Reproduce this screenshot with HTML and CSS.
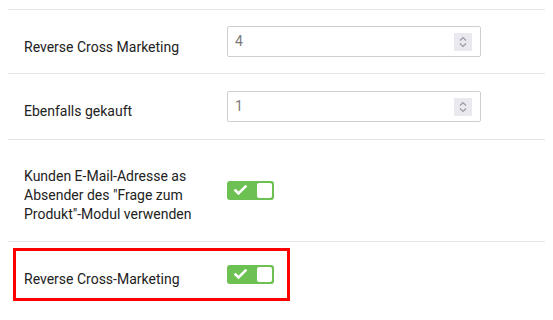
FILE: index.html
```html
<!DOCTYPE html>
<html>
<head>
<title>Einstellungen</title>
<link rel="stylesheet" href="styles.css">
</head>
<body>

<div class="settings">
  <div class="row first">
    <div class="label">Reverse Cross Marketing</div>
    <div class="control">
      <div class="number-input">
        <span class="value">4</span>
        <span class="spinner">
          <svg width="18" height="18" viewBox="0 0 18 18"><polyline points="6,7.5 9,4.5 12,7.5" /><polyline points="6,10.5 9,13.5 12,10.5" /></svg>
        </span>
      </div>
    </div>
  </div>

  <div class="row">
    <div class="label">Ebenfalls gekauft</div>
    <div class="control">
      <div class="number-input">
        <span class="value">1</span>
        <span class="spinner">
          <svg width="18" height="18" viewBox="0 0 18 18"><polyline points="6,7.5 9,4.5 12,7.5" /><polyline points="6,10.5 9,13.5 12,10.5" /></svg>
        </span>
      </div>
    </div>
  </div>

  <div class="row">
    <div class="label">Kunden E-Mail-Adresse as Absender des "Frage zum Produkt"-Modul verwenden</div>
    <div class="control">
      <span class="switch">
        <svg class="check" width="28" height="19" viewBox="0 0 28 19"><polyline points="8.5,9.5 11.5,12.5 18.5,5.5" /></svg>
        <span class="knob"></span>
      </span>
    </div>
  </div>

  <div class="row last">
    <div class="highlight">
      <div class="label">Reverse Cross-Marketing</div>
      <div class="control">
        <span class="switch">
          <svg class="check" width="28" height="19" viewBox="0 0 28 19"><polyline points="8.5,9.5 11.5,12.5 18.5,5.5" /></svg>
          <span class="knob"></span>
        </span>
      </div>
    </div>
  </div>
</div>

</body>
</html>
```

FILE: styles.css
```css
body {margin: 9px 8px; font-family: Roboto, "Liberation Sans", sans-serif; font-size: 14px; color: #222; background: #fff;}

.settings {width: 540px; border-top: 1px solid #e3e3e3;}
.row {display: flex; align-items: center; padding: 17px 0 17px 16px; border-bottom: 1px solid #e3e3e3;}
.row.first {padding-top: 16px; padding-bottom: 16px;}
.row.last {border-bottom: none; padding: 6px 0 0 5px;}

.label {width: 190px; padding: 10px 13px 0 0; line-height: 19px;}
.row.first .label, .row.last .label {line-height: 20px;}

.highlight {display: flex; align-items: center; border: 3px solid #f00; padding: 8px 13px 9px 8px;}

.number-input {display: flex; align-items: center; justify-content: space-between; box-sizing: border-box; width: 254px; height: 31px; padding: 0 8px 0 7px; border: 1px solid #cfcfcf; border-radius: 2px; background: #fff;}
.number-input .value {color: #7a7a7a; font-size: 14px; padding-bottom: 2px;}
.number-input .spinner {display: block; width: 18px; height: 18px; background: #e9e9ef;}
.number-input .spinner svg {display: block;}
.number-input .spinner polyline {fill: none; stroke: #9a9aa6; stroke-width: 1.2;}

.switch {position: relative; display: flex; align-items: center; width: 47px; height: 19px; background: #6dc052; border-radius: 3px;}
.switch .check {display: block;}
.switch .check polyline {fill: none; stroke: #fff; stroke-width: 2.6; stroke-linecap: square;}
.switch .knob {position: absolute; right: 2px; top: 2px; width: 15px; height: 15px; background: #fff; border-radius: 2px;}
```
